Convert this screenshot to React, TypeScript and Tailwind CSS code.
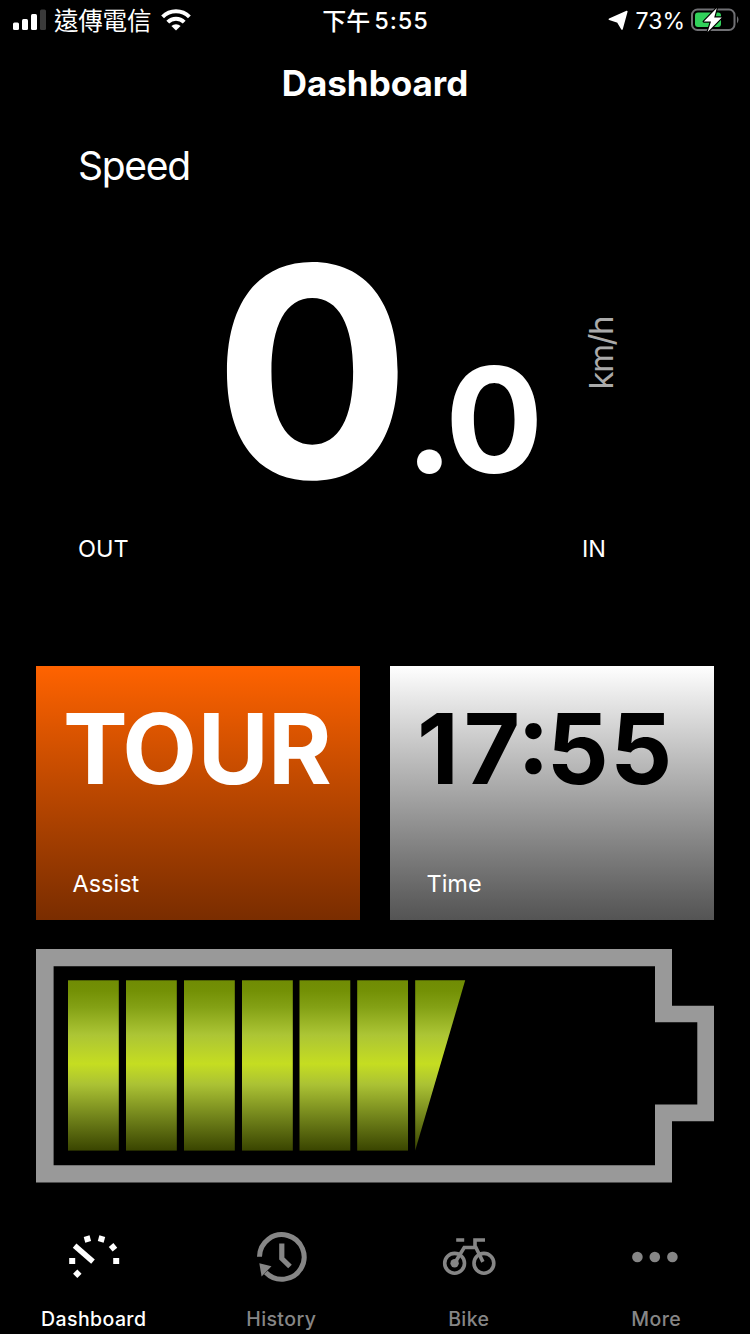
import type { ReactNode } from "react";

const CELLS = [68, 126, 184, 242, 299.5, 357.2];

function StatusBar() {
  return (
    <header className="grid h-10 grid-cols-3 items-center">
      <div className="flex items-center pl-3">
        <svg width="34" height="22" viewBox="0 0 34 22" fill="#fff">
          <rect x="1" y="13.5" width="6" height="7.5" rx="1.5" />
          <rect x="10" y="10" width="6" height="11" rx="1.5" />
          <rect x="19" y="5" width="6" height="16" rx="1.5" />
          <rect x="28" y="0.5" width="6" height="20.5" rx="1.5" fill="#3a3a3a" />
        </svg>
        <span className="ml-2 font-['Noto_Sans_CJK_TC',sans-serif] text-[24.5px] leading-10 tracking-[-0.2px] whitespace-nowrap">遠傳電信</span>
        <svg className="ml-2.5" width="30" height="24" viewBox="0 0 30 24" fill="none" stroke="#fff" strokeWidth="4">
          <path d="M1.6 8.8 A19 19 0 0 1 28.4 8.8" />
          <path d="M6.8 14.2 A11.6 11.6 0 0 1 23.2 14.2" />
          <path d="M15 22.5 L10.4 18 A6.6 6.6 0 0 1 19.6 18 Z" fill="#fff" stroke="none" />
        </svg>
      </div>
      <div className="flex items-center justify-center gap-1 pl-px font-medium">
        <span className="font-['Noto_Sans_CJK_TC',sans-serif] text-[24px] leading-10">下午</span>
        <span className="pt-0.5 text-[23.5px] leading-[38px] tracking-[0.9px]">5:55</span>
      </div>
      <div className="flex items-center justify-end pr-[10px]">
        <svg width="20" height="22" viewBox="0 0 20 22" fill="#fff" stroke="#fff" strokeWidth="1.6" strokeLinejoin="round">
          <path d="M18.8 2.6 L14 20 L9.8 13 L1.4 10.2 Z" />
        </svg>
        <span className="ml-2 pt-0.5 text-[23px] leading-[38px]">73%</span>
        <svg className="ml-1.5" width="49" height="26" viewBox="0 0 49 26">
          <rect x="1" y="2.5" width="42.5" height="20.5" rx="5.5" fill="none" stroke="#707074" strokeWidth="2" />
          <path d="M46 9 Q49 12.7 46 16.5 Z" fill="#707074" />
          <rect x="4" y="5.5" width="26" height="14.5" rx="3" fill="#32d15b" />
          <path d="M25.8 1 L12.8 14.5 H20 L16.6 25 L30.8 10.5 H23.2 Z" fill="#fff" stroke="#000" strokeWidth="2.4" paintOrder="stroke" strokeLinejoin="round" />
        </svg>
      </div>
    </header>
  );
}

function Card({ value, label, tone, valueTone }: { value: ReactNode; label: string; tone: string; valueTone: string }) {
  return (
    <div className={`flex h-[254px] w-[324px] flex-col justify-between pb-6 pt-[34px] ${tone}`}>
      <div className={`whitespace-nowrap pl-[27px] text-[97px] font-bold leading-none ${valueTone}`}>{value}</div>
      <div className="pl-[36.5px] text-[23.5px] leading-none">{label}</div>
    </div>
  );
}

function Battery() {
  return (
    <svg className="mx-9 mt-[29px] block" width="678" height="234" viewBox="36 949 678 234">
      <defs>
        <linearGradient id="cell" gradientUnits="userSpaceOnUse" x1="0" y1="980" x2="0" y2="1151">
          <stop offset="0" stopColor="#708c04" />
          <stop offset="0.06" stopColor="#739005" />
          <stop offset="0.16" stopColor="#84a115" />
          <stop offset="0.32" stopColor="#acc535" />
          <stop offset="0.49" stopColor="#c5dd21" />
          <stop offset="0.61" stopColor="#abc234" />
          <stop offset="0.8" stopColor="#72841b" />
          <stop offset="1" stopColor="#394400" />
        </linearGradient>
      </defs>
      <path
        fill="#999"
        fillRule="evenodd"
        d="M36 949H672V1005.8H714V1121.2H672V1182.5H36Z M53.6 966.2V1165.2H655V1104.5H697.3V1022.2H655V966.2Z"
      />
      {CELLS.map((x) => (
        <rect key={x} x={x} y="980.3" width="50.8" height="170.3" fill="url(#cell)" />
      ))}
      <path d="M415.2 980.3H465.2L415.2 1150.6Z" fill="url(#cell)" />
    </svg>
  );
}

function Tab({ label, active, children }: { label: string; active?: boolean; children: ReactNode }) {
  return (
    <div className={`flex flex-1 flex-col items-center ${active ? "text-white" : "text-[#868686]"}`}>
      <svg width="60" height="60" viewBox="0 0 60 60" fill="none" stroke="currentColor">
        {children}
      </svg>
      <span className="mt-6 text-[19.5px] font-medium leading-none tracking-[0.4px]">{label}</span>
    </div>
  );
}

export default function App() {
  return (
    <div className="flex h-[1334px] w-[750px] flex-col overflow-hidden bg-black font-['Inter',sans-serif] text-white">
      <StatusBar />
      <h1 className="pt-[26px] text-center text-[35px] font-bold leading-none">Dashboard</h1>
      <h2 className="mt-[45px] pl-[78px] text-[39px] leading-none tracking-[-1.3px]">Speed</h2>

      <section className="mt-[40px] flex h-[292px] items-start pl-[213.5px]">
        <div className="w-[191.5px] text-[293px] font-bold leading-none tracking-[-3px]">0</div>
        <div className="w-[142px] pt-[122px] text-[146px] font-bold leading-none tracking-[-4.5px]">.0</div>
        <div className="mt-[92px] ml-[34px] rotate-180 text-[33px] leading-10 tracking-[-1.5px] text-[#aaa] [writing-mode:vertical-rl]">km/h</div>
      </section>

      <section className="mt-[20px] flex justify-between pl-[78px] pr-[144px] text-[23.5px] leading-none">
        <span>OUT</span>
        <span>IN</span>
      </section>

      <section className="mt-[105px] flex gap-[30px] pl-9">
        <Card
          value={<><span className="tracking-[-5.5px]">T</span><span className="tracking-[0.8px]">O</span>UR</>}
          label="Assist"
          tone="bg-linear-to-b from-[#ff6300] to-[#7a2d00]"
          valueTone="tracking-[-0.8px]"
        />
        <Card
          value={<><span className="tracking-[5px]">1</span><span className="tracking-[-3px]">7</span><span className="tracking-[-3px] [font-feature-settings:'case']">:</span><span className="tracking-[1.5px]">55</span></>}
          label="Time"
          tone="bg-linear-to-b from-white to-[#545454]"
          valueTone="text-black [font-kerning:none]"
        />
      </section>

      <Battery />

      <nav className="mt-[43px] flex">
        <Tab label="Dashboard" active>
          <path d="M10.6 19.7 L29 35.6" strokeWidth="5.5" />
          <g fill="currentColor" stroke="none">
            <rect x="20.4" y="10" width="6" height="6" transform="rotate(-15 23.4 13)" />
            <rect x="34.5" y="10" width="6" height="6" transform="rotate(15 37.5 13)" />
            <rect x="46" y="18.3" width="6" height="6" transform="rotate(50 49 21.3)" />
            <rect x="49.2" y="32" width="6" height="6" />
            <rect x="5.2" y="32" width="6" height="6" />
            <rect x="10.3" y="44.7" width="6" height="6" transform="rotate(45 13.3 47.7)" />
          </g>
        </Tab>
        <Tab label="History">
          <path d="M8.5 30.8 A22.3 22.3 0 1 1 14.8 46.5" strokeWidth="5" />
          <path d="M30.8 17.5 V32.5 L39 40.5" strokeWidth="5.2" />
          <path d="M8.3 37.3 L20.5 40.3 L10.6 50.4 Z" fill="currentColor" stroke="none" />
        </Tab>
        <Tab label="Bike">
          <circle cx="15.6" cy="37.3" r="9.9" strokeWidth="3.6" />
          <circle cx="44.9" cy="37.3" r="9.9" strokeWidth="3.6" />
          <circle cx="15.6" cy="37.3" r="4.2" fill="currentColor" stroke="none" />
          <path d="M15.6 37.3 L25.2 21.5 H36.9 L43.9 35.9 M17.2 14 H25.2 M36 22 V14 H46" strokeWidth="3.6" />
        </Tab>
        <Tab label="More">
          <g fill="currentColor" stroke="none">
            <circle cx="11.4" cy="31" r="5.3" />
            <circle cx="28.8" cy="31" r="5.3" />
            <circle cx="46.4" cy="31" r="5.3" />
          </g>
        </Tab>
      </nav>
    </div>
  );
}
